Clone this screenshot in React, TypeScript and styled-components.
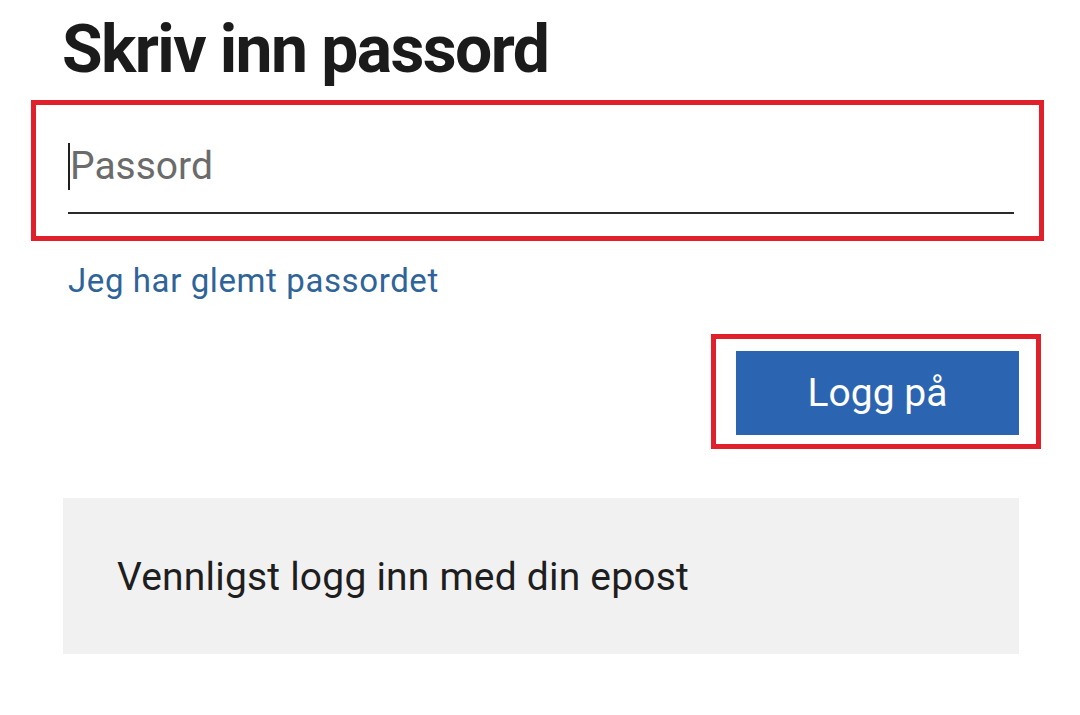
import React from "react";
import styled, { createGlobalStyle } from "styled-components";

const Global = createGlobalStyle`
  html, body { margin: 0; padding: 0; background: #ffffff; }
  body { font-family: Roboto, "Noto Sans", sans-serif; color: #1b1b1b; }
`;

const Page = styled.main`
  display: flex;
  flex-direction: column;
  width: 1080px;
  height: 715px;
  overflow: hidden;
`;

const Title = styled.h1`
  margin: 0 0 10px 62px;
  padding-top: 10px;
  font-size: 66px;
  line-height: 80px;
  font-weight: 700;
  letter-spacing: -1.6px;
  color: #1b1b1b;
`;

const Highlight = styled.div<{ $w: number; $pad: string }>`
  box-sizing: border-box;
  width: ${(p) => p.$w}px;
  border: 5px solid #e0202b;
  padding: ${(p) => p.$pad};
`;

const InputWrap = styled(Highlight)`
  margin-left: 31px;
`;

const Field = styled.div`
  display: flex;
  align-items: center;
  width: 946px;
  height: 48px;
  padding: 0 0 22px 0;
  border-bottom: 2px solid #2a2a2a;
`;

const Caret = styled.span`
  display: block;
  width: 2px;
  height: 47px;
  background: #1f1f1f;
`;

const Placeholder = styled.span`
  font-size: 39px;
  line-height: 48px;
  color: #6b6b6b;
`;

const Link = styled.a`
  margin: 20px 0 0 68px;
  font-size: 33px;
  line-height: 40px;
  letter-spacing: 0.6px;
  color: #2f6499;
  text-decoration: none;
  align-self: flex-start;
`;

const ButtonRow = styled.div`
  display: flex;
  justify-content: flex-start;
  margin-top: 33px;
  padding-left: 711px;
`;

const PrimaryButton = styled.button`
  box-sizing: border-box;
  width: 283px;
  height: 84px;
  border: none;
  background: #2b65b1;
  color: #ffffff;
  font-family: Roboto, sans-serif;
  font-size: 39px;
  padding: 0;
`;

const InfoBox = styled.div`
  box-sizing: border-box;
  margin: 49px 0 0 63px;
  width: 956px;
  height: 156px;
  background: #f1f1f1;
  display: flex;
  align-items: center;
  padding: 2px 0 0 54px;
  font-size: 39px;
  letter-spacing: 0.2px;
  color: #1e1e1e;
`;

export default function App() {
  return (
    <>
      <Global />
      <Page>
        <Title>Skriv inn passord</Title>
        <InputWrap $w={1013} $pad="37px 25px 22px 32px">
          <Field>
            <Caret />
            <Placeholder>Passord</Placeholder>
          </Field>
        </InputWrap>
        <Link href="#">Jeg har glemt passordet</Link>
        <ButtonRow>
          <Highlight $w={330} $pad="12px 17px 9px 20px">
            <PrimaryButton>Logg på</PrimaryButton>
          </Highlight>
        </ButtonRow>
        <InfoBox>Vennligst logg inn med din epost</InfoBox>
      </Page>
    </>
  );
}
